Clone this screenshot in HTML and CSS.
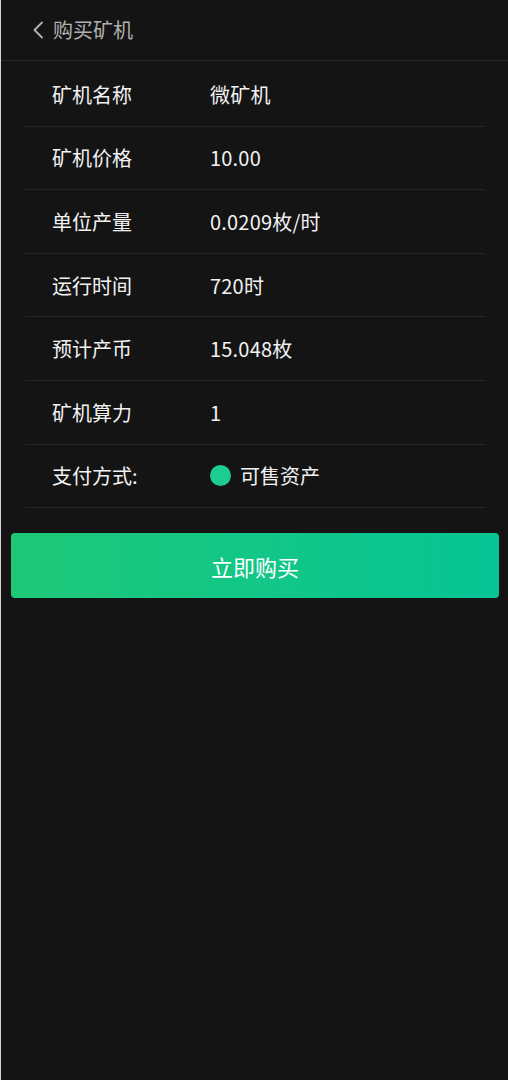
FILE: index.html
```html
<!DOCTYPE html>
<html lang="zh-CN">
<head>
<meta charset="utf-8">
<title>购买矿机</title>
<link rel="stylesheet" href="styles.css">
</head>
<body>
<div class="page">
  <header class="topbar">
    <svg class="back" width="12" height="18" viewBox="0 0 12 18"><path d="M10 1.5 L2.5 9 L10 16.5" fill="none" stroke="#b4b4b4" stroke-width="1.8" stroke-linecap="round" stroke-linejoin="round"/></svg>
    <span class="title">购买矿机</span>
  </header>
  <div class="list">
    <div class="row"><span class="label">矿机名称</span><span class="value">微矿机</span></div>
    <div class="row"><span class="label">矿机价格</span><span class="value">10.00</span></div>
    <div class="row"><span class="label">单位产量</span><span class="value">0.0209枚/时</span></div>
    <div class="row"><span class="label">运行时间</span><span class="value">720时</span></div>
    <div class="row"><span class="label">预计产币</span><span class="value">15.048枚</span></div>
    <div class="row"><span class="label">矿机算力</span><span class="value">1</span></div>
    <div class="row"><span class="label">支付方式:</span><span class="value pay"><span class="dot"></span>可售资产</span></div>
  </div>
  <div class="action">
    <button class="buy">立即购买</button>
  </div>
</div>
</body>
</html>
```
FILE: styles.css
```css
html, body {
  margin: 0;
  padding: 0;
  background: #141414;
}
body {
  font-family: "Noto Sans CJK SC", "Noto Sans", sans-serif;
  color: #f0f0f0;
}
.page {
  min-height: 1080px;
  border-left: 1px solid #d4d4d4;
  background: #141414;
  box-sizing: border-box;
}
.topbar {
  height: 60px;
  border-bottom: 1px solid #2a2a2a;
  display: flex;
  align-items: center;
  padding-left: 31px;
  gap: 9px;
  box-sizing: content-box;
}
.back {
  display: block;
}
.title {
  font-size: 20px;
  color: #b0b0b0;
  line-height: 1;
  margin-top: -1px;
}
.list {
  padding: 2px 23px 0 24px;
}
.row {
  height: 62.6px;
  border-bottom: 1px solid #262626;
  display: flex;
  align-items: center;
  font-size: 20px;
}
.label {
  width: 158px;
  padding-left: 27px;
  color: #f2f2f2;
}
.value {
  color: #f2f2f2;
  letter-spacing: 0.2px;
}
.pay {
  display: flex;
  align-items: center;
  gap: 9px;
  letter-spacing: 0;
}
.dot {
  width: 21px;
  height: 21px;
  border-radius: 50%;
  background: #1ccc90;
}
.action {
  padding: 25px 9px 0 10px;
}
.buy {
  width: 100%;
  height: 65px;
  border: none;
  border-radius: 4px;
  background: linear-gradient(90deg, #1fc878 0%, #05c595 100%);
  color: #ffffff;
  font-family: "Noto Sans CJK SC", sans-serif;
  font-size: 22px;
  cursor: pointer;
}
```
